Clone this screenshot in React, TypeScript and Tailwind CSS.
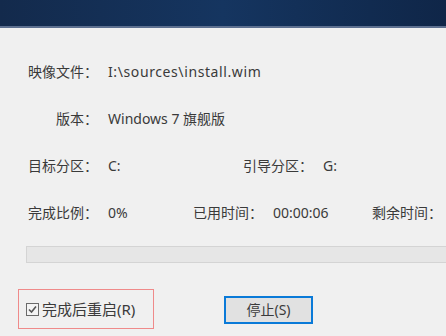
import React from "react";

const font = { fontFamily: '"Noto Sans", "Noto Sans CJK SC", sans-serif' };

const Field = ({ label, value, width, valueClass }: { label: string; value: string; width?: string; valueClass?: string }) => (
  <div className={`flex items-center ${width ?? ""}`}>
    <span className="w-[72px] text-right">{label}</span>
    <span className={`ml-[10px] ${valueClass ?? ""}`}>{value}</span>
  </div>
);

export default function App() {
  return (
    <div
      className="w-[446px] h-[336px] overflow-hidden bg-[#f0f0f0] text-[14px] text-[#3a3a3a]"
      style={font}
    >
      {/* title strip */}
      <div className="h-[26px] bg-gradient-to-r from-[#132a4c] via-[#153560] to-[#0f2648]" />
      <div className="h-[2px] bg-[#5d7090]" />

      <div className="mt-[20px] pl-[26px]">
        <div className="h-[47px] flex items-center">
          <Field label="映像文件：" value="I:\sources\install.wim" valueClass="tracking-[0.6px]" />
        </div>
        <div className="h-[47px] flex items-center">
          <Field label="版本：" value="Windows 7 旗舰版" />
        </div>
        <div className="h-[47px] flex items-center">
          <Field label="目标分区：" value="C:" width="w-[215px]" />
          <Field label="引导分区：" value="G:" />
        </div>
        <div className="h-[47px] flex items-center whitespace-nowrap">
          <Field label="完成比例：" value="0%" width="w-[165px]" />
          <Field label="已用时间：" value="00:00:06" width="w-[181px]" />
          <span>剩余时间：</span>
        </div>

        {/* progress bar */}
        <div className="mt-[10px] h-[17px] w-[440px] border border-[#d4d4d4] bg-[#e6e6e6]" />

        <div className="mt-[26px] flex items-center">
          <div className="-ml-[8px] h-[40px] w-[136px] border border-[#ef8a8a] flex items-center pl-[7px]">
            <svg width="13" height="13" viewBox="0 0 13 13" className="shrink-0">
              <rect x="0.5" y="0.5" width="12" height="12" fill="#f4f4f4" stroke="#6a6a6a" />
              <path d="M3 6.5 L5.5 9 L10 3.5" fill="none" stroke="#555" strokeWidth="1.6" />
            </svg>
            <span className="ml-[3px] text-[15px]">完成后重启(R)</span>
          </div>
          <button className="ml-[70px] mt-[1px] h-[28px] w-[89px] border-2 border-[#0a7ad8] bg-[#e1e1e1] flex items-center justify-center text-[14px] text-[#3a3a3a]">
            停止(S)
          </button>
        </div>
      </div>
    </div>
  );
}
